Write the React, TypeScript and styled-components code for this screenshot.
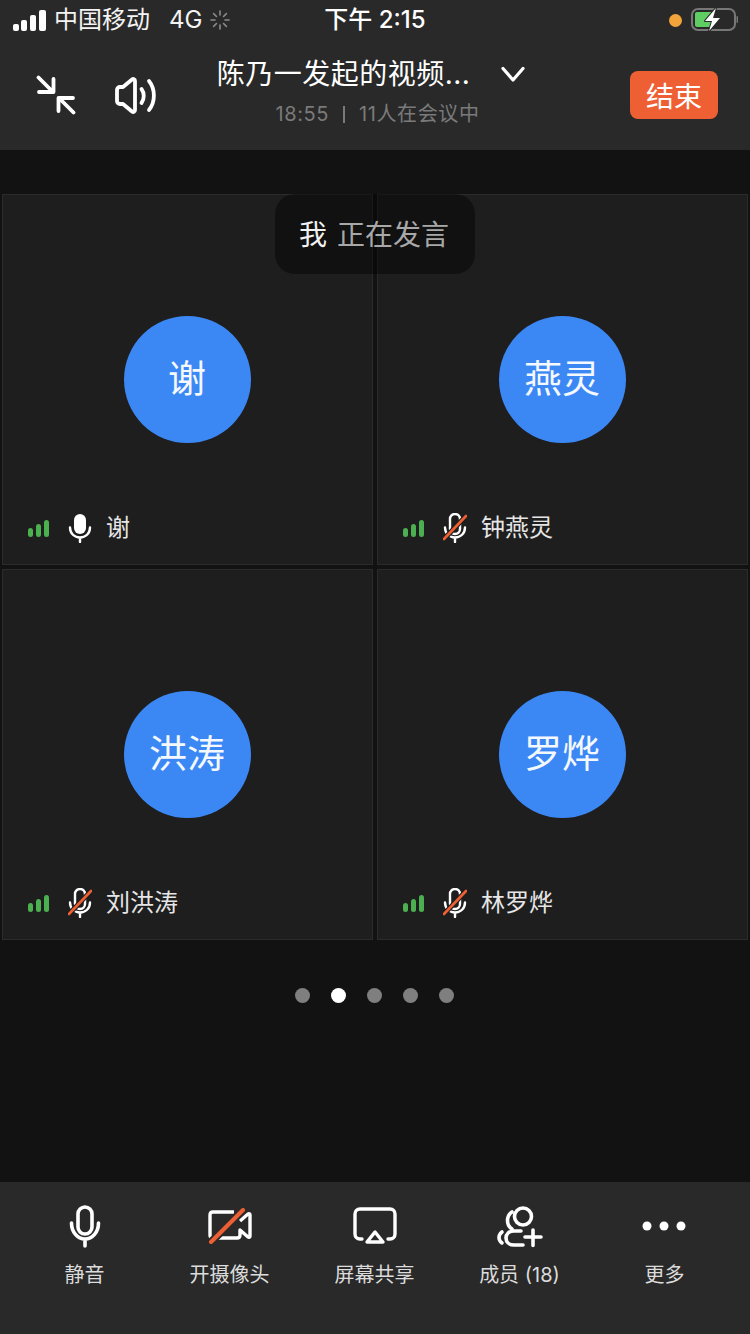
import styled, { createGlobalStyle } from "styled-components";

const FONT = `"Inter", "Liberation Sans", "Noto Sans CJK SC", sans-serif`;
const ORANGE = "#ee6033";
const CHROME = "#292929";
const TILE = "#1e1e1e";

const participants = [
    { avatar: "谢", name: "谢", muted: false },
    { avatar: "燕灵", name: "钟燕灵", muted: true },
    { avatar: "洪涛", name: "刘洪涛", muted: true },
    { avatar: "罗烨", name: "林罗烨", muted: true },
];

const pages = [false, true, false, false, false];

export default function App() {
    return (
        <Page>
            <GlobalStyle />
            <Header>
                <StatusBar>
                    <StatusLeft>
                        <CellSignal />
                        <Carrier>中国移动</Carrier>
                        <Network>4G</Network>
                        <Spinner />
                    </StatusLeft>
                    <Clock>下午 2:15</Clock>
                    <StatusRight>
                        <RecordingDot />
                        <Battery />
                    </StatusRight>
                </StatusBar>
                <NavBar>
                    <NavTools>
                        <MinimizeIcon />
                        <SpeakerIcon />
                    </NavTools>
                    <MeetingInfo>
                        <TitleRow>
                            <Title>陈乃一发起的视频...</Title>
                            <ChevronIcon />
                        </TitleRow>
                        <Subtitle>
                            18:55
                            <SubtitleDivider />
                            11人在会议中
                        </Subtitle>
                    </MeetingInfo>
                    <EndButton>结束</EndButton>
                </NavBar>
            </Header>

            <Main>
                <Stage>
                    <SpeakerToast>
                        <ToastName>我</ToastName>
                        <ToastText>正在发言</ToastText>
                    </SpeakerToast>
                    <VideoGrid>
                        {participants.map(p => (
                            <Tile key={p.name}>
                                <Avatar>{p.avatar}</Avatar>
                                <TileFooter>
                                    <SignalBars />
                                    <TileMic muted={p.muted} />
                                    <TileName>{p.name}</TileName>
                                </TileFooter>
                            </Tile>
                        ))}
                    </VideoGrid>
                </Stage>
                <Pager>
                    {pages.map((active, i) => (
                        <PagerDot key={i} $active={active} />
                    ))}
                </Pager>
            </Main>

            <Toolbar>
                <ToolItem>
                    <ToolIcon><MicOutlineIcon /></ToolIcon>
                    <ToolLabel>静音</ToolLabel>
                </ToolItem>
                <ToolItem>
                    <ToolIcon><CameraOffIcon /></ToolIcon>
                    <ToolLabel>开摄像头</ToolLabel>
                </ToolItem>
                <ToolItem>
                    <ToolIcon><ScreenShareIcon /></ToolIcon>
                    <ToolLabel>屏幕共享</ToolLabel>
                </ToolItem>
                <ToolItem>
                    <ToolIcon><MembersIcon /></ToolIcon>
                    <ToolLabel>成员 (18)</ToolLabel>
                </ToolItem>
                <ToolItem>
                    <ToolIcon><MoreIcon /></ToolIcon>
                    <ToolLabel>更多</ToolLabel>
                </ToolItem>
            </Toolbar>
        </Page>
    );
}

function CellSignal() {
    return (
        <svg width="33" height="21" viewBox="0 0 33 21" fill="#fff">
            <rect x="0" y="14" width="6" height="7" rx="2" />
            <rect x="8" y="10" width="6" height="11" rx="2" />
            <rect x="17" y="5" width="6" height="16" rx="2" />
            <rect x="26" y="0" width="7" height="21" rx="2" />
        </svg>
    );
}

function Spinner() {
    const spokes = [0, 45, 90, 135, 180, 225, 270, 315];
    return (
        <svg width="20" height="20" viewBox="0 0 20 20" stroke="#8a8a8a" strokeWidth="1.6" strokeLinecap="round">
            {spokes.map(a => (
                <line key={a} x1="10" y1="5" x2="10" y2="1" transform={`rotate(${a} 10 10)`} />
            ))}
        </svg>
    );
}

function Battery() {
    return (
        <svg width="48" height="28" viewBox="0 0 48 28">
            <rect x="2" y="3" width="43" height="21" rx="6" fill="none" stroke="#777" strokeWidth="2" />
            <path d="M5 8a2 2 0 0 1 2-2h17v15H7a2 2 0 0 1-2-2z" fill="#5fce62" />
            <rect x="46.500" y="10" width="1.500" height="7" rx="0.700" fill="#777" />
            <path d="M26 2 15 15h7l-3 10 11-13h-7z" fill="#fff" stroke={CHROME} strokeWidth="2" strokeLinejoin="round" paintOrder="stroke" />
        </svg>
    );
}

function MinimizeIcon() {
    return (
        <svg width="40" height="40" viewBox="0 0 40 40" fill="none" stroke="#fff" strokeWidth="3.800" strokeLinecap="round" strokeLinejoin="round">
            <path d="M2.500 2.500 17 17M3 17H17.500V4" />
            <path d="M37.500 37.500 23 23M37 23H22.500V36" />
        </svg>
    );
}

function SpeakerIcon() {
    return (
        <svg width="42" height="40" viewBox="0 0 42 40" fill="none" stroke="#fff" strokeWidth="3.800" strokeLinecap="round" strokeLinejoin="round">
            <path d="M5 12h3l9-7.500c1.300-1 3-.4 3 1.500v29c0 1.900-1.700 2.500-3 1.500L8 29H5c-1.700 0-3-1.300-3-3V15c0-1.700 1.300-3 3-3z" />
            <path d="M26.500 14c3 4 3 10 0 14" />
            <path d="M34 6c6.500 8 6.500 21 0 29" />
        </svg>
    );
}

function ChevronIcon() {
    return (
        <svg width="26" height="16" viewBox="0 0 26 16" fill="none" stroke="#fff" strokeWidth="3.200" strokeLinecap="round" strokeLinejoin="round">
            <path d="M3 2.500 13 14 23 2.500" />
        </svg>
    );
}

function SignalBars() {
    return (
        <svg width="21" height="17" viewBox="0 0 21 17" fill="#4caf50">
            <rect x="0" y="8" width="5" height="9" rx="2.500" />
            <rect x="8" y="4" width="5" height="13" rx="2.500" />
            <rect x="16" y="0" width="5" height="17" rx="2.500" />
        </svg>
    );
}

function TileMic({ muted }: { muted: boolean }) {
    return (
        <svg width="24" height="30" viewBox="0 0 24 30" fill="none">
            <rect
                x={muted ? 7 : 6}
                y="1"
                width={muted ? 10 : 12}
                height="20"
                rx={muted ? 5 : 6}
                fill={muted ? "none" : "#fff"}
                stroke="#fff"
                strokeWidth={muted ? 2.4 : 0}
            />
            <path d="M2 14.500c0 6 4.500 10 10 10s10-4 10-10M12 24.500V29" stroke="#fff" strokeWidth="2.400" strokeLinecap="round" />
            {muted && <path d="M1 26 23 3" stroke={TILE} strokeWidth="5" />}
            {muted && <path d="M1 26 23 3" stroke={ORANGE} strokeWidth="2.600" strokeLinecap="round" />}
        </svg>
    );
}

function MicOutlineIcon() {
    return (
        <svg width="32" height="44" viewBox="0 0 32 44" fill="none" stroke="#fff" strokeLinecap="round">
            <rect x="9" y="3" width="14" height="27" rx="7" strokeWidth="3.600" />
            <path d="M2.500 19c0 9 6 16 13.500 16s13.500-7 13.500-16M16 35v7" strokeWidth="3.600" />
        </svg>
    );
}

function CameraOffIcon() {
    return (
        <svg width="44" height="36" viewBox="0 0 44 36" fill="none">
            <path d="M26 4H5C3 4 2 5 2 7v20c0 2 1 3 3 3h24c2 0 3-1 3-3v-5l8 7c1 .8 2 .2 2-1V7c0-1.200-1-1.800-2-1l-8 7" stroke="#fff" strokeWidth="3.400" strokeLinejoin="round" />
            <path d="M3 34 35 2" stroke={CHROME} strokeWidth="8" />
            <path d="M3 34 35 2" stroke={ORANGE} strokeWidth="4" strokeLinecap="round" />
        </svg>
    );
}

function ScreenShareIcon() {
    return (
        <svg width="44" height="38" viewBox="0 0 44 38" fill="none" stroke="#fff" strokeWidth="3.400" strokeLinecap="round" strokeLinejoin="round">
            <path d="M9 32H7c-3 0-5-2-5-5V7c0-3 2-5 5-5h30c3 0 5 2 5 5v20c0 3-2 5-5 5h-2" />
            <path d="M22 25 14 35h16z" />
        </svg>
    );
}

function MembersIcon() {
    return (
        <svg width="46" height="44" viewBox="0 0 46 44" fill="none" stroke="#fff" strokeWidth="3.600" strokeLinecap="round">
            <circle cx="26" cy="12.500" r="8.500" />
            <path d="M15 8c-6 4-6 13 0 17" />
            <path d="M24 27h-7c-5 0-8 3-8 7s3 7 8 7h9" />
            <path d="M5 28c-4 3-4 8 0 11" />
            <path d="M28 33H44M36 26V41.500" />
        </svg>
    );
}

function MoreIcon() {
    return (
        <svg width="46" height="10" viewBox="0 0 46 10" fill="#fff">
            <circle cx="5" cy="5" r="4.500" />
            <circle cx="22" cy="5" r="4.500" />
            <circle cx="39" cy="5" r="4.500" />
        </svg>
    );
}

const GlobalStyle = createGlobalStyle`
    html, body {
        margin: 0;
        padding: 0;
        background: #121212;
    }
    svg {
        display: block;
        flex-shrink: 0;
    }
`;

const Page = styled.div`
    width: 750px;
    height: 1334px;
    display: flex;
    flex-direction: column;
    overflow: hidden;
    background: #121212;
    color: #fff;
    font-family: ${FONT};
`;

const Header = styled.header`
    height: 150px;
    background: ${CHROME};
`;

const StatusBar = styled.div`
    height: 40px;
    display: grid;
    grid-template-columns: 1fr auto 1fr;
    align-items: center;
    padding: 0 12px 0 13px;
`;

const StatusLeft = styled.div`
    display: flex;
    align-items: center;
`;

const Carrier = styled.span`
    margin-left: 8px;
    font-size: 24px;
    line-height: 40px;
    color: #f4f4f4;
`;

const Network = styled.span`
    margin: 0 8px 0 19px;
    font-size: 24px;
    line-height: 40px;
    color: #f4f4f4;
`;

const Clock = styled.span`
    margin-left: -1px;
    font-size: 24px;
    font-weight: 500;
    line-height: 40px;
`;

const StatusRight = styled.div`
    display: flex;
    align-items: center;
    justify-content: flex-end;
    gap: 8px;
`;

const RecordingDot = styled.span`
    width: 13px;
    height: 13px;
    border-radius: 50%;
    background: #f2a33a;
`;

const NavBar = styled.div`
    height: 110px;
    display: grid;
    grid-template-columns: 190px 375px 1fr;
    align-items: start;
`;

const NavTools = styled.div`
    display: flex;
    gap: 39px;
    padding: 35px 0 0 36px;
`;

const MeetingInfo = styled.div`
    display: flex;
    flex-direction: column;
    align-items: center;
    padding-top: 14px;
`;

const TitleRow = styled.div`
    display: flex;
    align-items: center;
    gap: 30px;
    margin-left: -12px;
`;

const Title = styled.div`
    font-size: 28px;
    letter-spacing: 0.5px;
    line-height: 40px;
    white-space: nowrap;
`;

const Subtitle = styled.div`
    display: flex;
    align-items: center;
    margin-top: 6px;
    font-size: 20px;
    letter-spacing: 0.6px;
    line-height: 28px;
    color: #7a7a7a;
    white-space: nowrap;
`;

const SubtitleDivider = styled.span`
    width: 2px;
    height: 17px;
    margin: 0 14px;
    background: #7a7a7a;
`;

const EndButton = styled.button`
    justify-self: end;
    width: 88px;
    height: 48px;
    margin: 31px 32px 0 0;
    padding: 0;
    border: 0;
    border-radius: 8px;
    background: ${ORANGE};
    color: #fff;
    font-family: inherit;
    font-size: 28px;
`;

const Main = styled.main`
    flex: 1;
    display: flex;
    flex-direction: column;
    padding-top: 44px;
`;

const Stage = styled.div`
    position: relative;
`;

const SpeakerToast = styled.div`
    position: absolute;
    top: 0;
    left: 275px;
    z-index: 1;
    width: 200px;
    height: 80px;
    box-sizing: border-box;
    display: flex;
    align-items: center;
    justify-content: center;
    gap: 10px;
    padding: 0 2px 3px 0;
    border-radius: 20px;
    background: rgba(0, 0, 0, 0.42);
    font-size: 28px;
`;

const ToastName = styled.span`
    color: #f2f2f2;
`;

const ToastText = styled.span`
    color: #a8a8a8;
`;

const VideoGrid = styled.div`
    display: grid;
    grid-template-columns: repeat(2, 371px);
    grid-auto-rows: 371px;
    gap: 4px;
    padding: 0 2px;
`;

const Tile = styled.div`
    display: grid;
    grid-template-rows: 1fr auto 1fr;
    justify-items: center;
    box-sizing: border-box;
    border: 1px solid #2b2b2b;
    background: ${TILE};
`;

const Avatar = styled.div`
    grid-row: 2;
    width: 127px;
    height: 127px;
    box-sizing: border-box;
    display: flex;
    align-items: center;
    justify-content: center;
    padding: 0 1px 8px 0;
    border-radius: 50%;
    background: #3b88f5;
    font-size: 38px;
    color: #f4f8ff;
`;

const TileFooter = styled.div`
    grid-row: 3;
    justify-self: stretch;
    align-self: end;
    display: flex;
    align-items: center;
    gap: 19px;
    height: 30px;
    padding: 0 0 21px 25px;
`;

const TileName = styled.span`
    margin-left: -5px;
    font-size: 24px;
    line-height: 30px;
    color: #e6e6e6;
`;

const Pager = styled.div`
    display: flex;
    justify-content: center;
    gap: 21px;
    margin-top: 48px;
    padding-right: 2px;
`;

const PagerDot = styled.span<{ $active: boolean }>`
    width: 15px;
    height: 15px;
    border-radius: 50%;
    background: ${p => (p.$active ? "#fff" : "#7f7f7f")};
`;

const Toolbar = styled.nav`
    height: 152px;
    box-sizing: border-box;
    display: grid;
    grid-template-columns: repeat(5, 145px);
    padding: 22px 0 0 12px;
    background: ${CHROME};
`;

const ToolItem = styled.div`
    display: flex;
    flex-direction: column;
    align-items: center;
`;

const ToolIcon = styled.div`
    height: 44px;
    display: flex;
    align-items: center;
    justify-content: center;
`;

const ToolLabel = styled.span`
    margin-top: 13px;
    font-size: 20px;
    line-height: 28px;
    color: #dcdcdc;
    white-space: nowrap;
`;
